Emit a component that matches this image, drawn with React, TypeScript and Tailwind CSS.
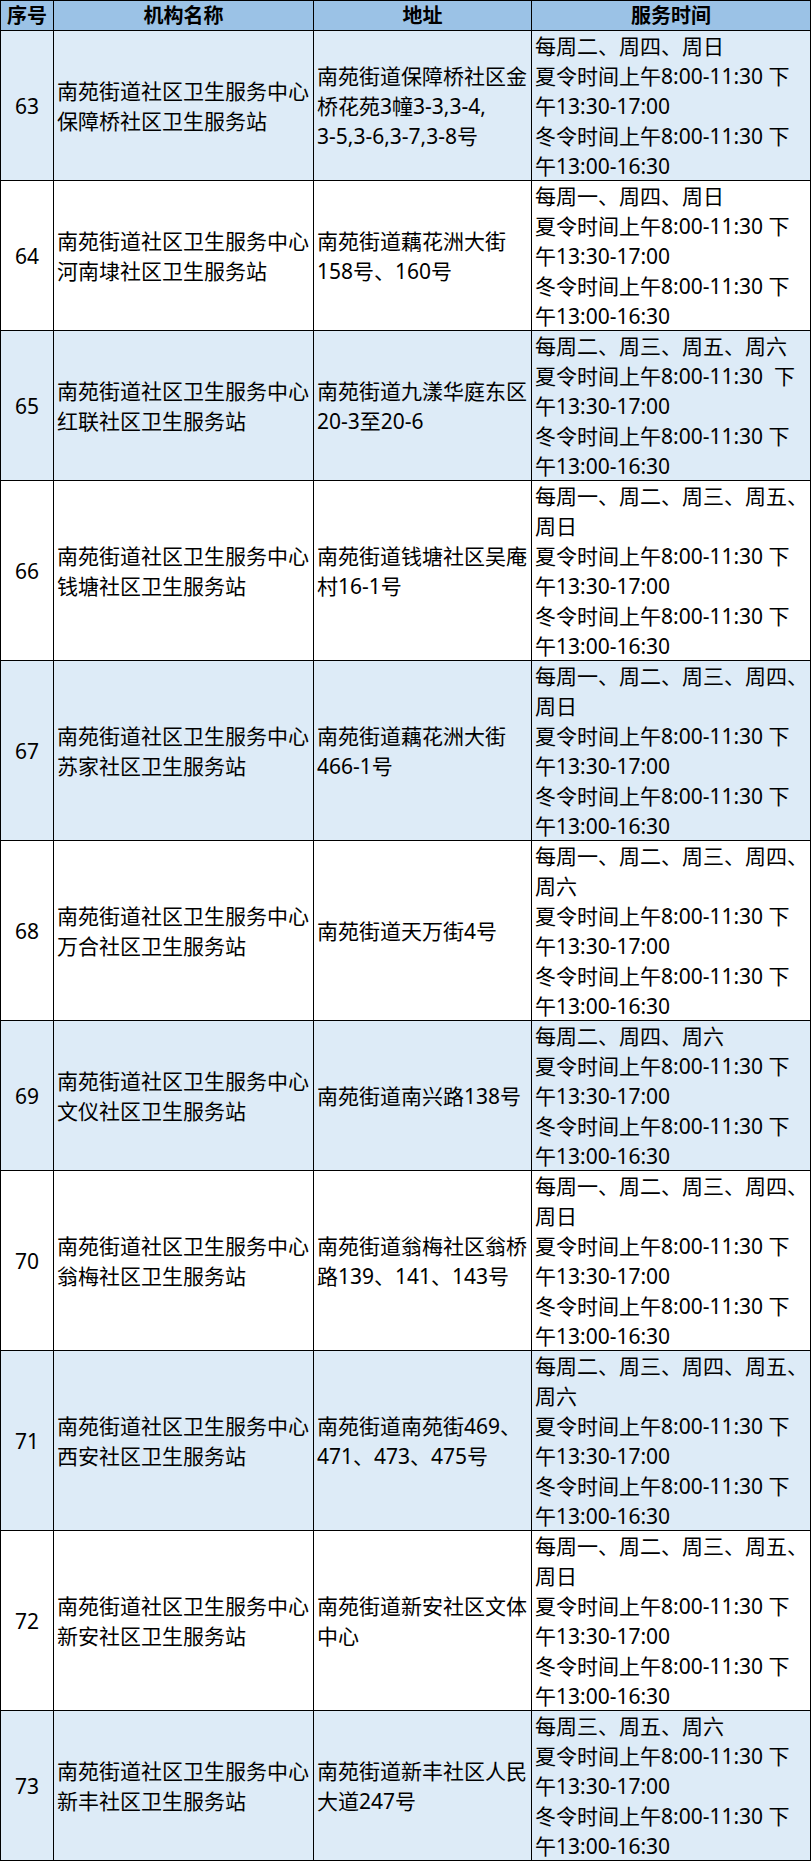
const rows = [
  {
    no: "63",
    name: ["南苑街道社区卫生服务中心", "保障桥社区卫生服务站"],
    addr: ["南苑街道保障桥社区金", "桥花苑3幢3-3,3-4,", "3-5,3-6,3-7,3-8号"],
    days: ["每周二、周四、周日"],
    summer: "夏令时间上午8:00-11:30 下",
  },
  {
    no: "64",
    name: ["南苑街道社区卫生服务中心", "河南埭社区卫生服务站"],
    addr: ["南苑街道藕花洲大街", "158号、160号"],
    days: ["每周一、周四、周日"],
    summer: "夏令时间上午8:00-11:30 下",
  },
  {
    no: "65",
    name: ["南苑街道社区卫生服务中心", "红联社区卫生服务站"],
    addr: ["南苑街道九漾华庭东区", "20-3至20-6"],
    days: ["每周二、周三、周五、周六"],
    summer: "夏令时间上午8:00-11:30  下",
  },
  {
    no: "66",
    name: ["南苑街道社区卫生服务中心", "钱塘社区卫生服务站"],
    addr: ["南苑街道钱塘社区吴庵", "村16-1号"],
    days: ["每周一、周二、周三、周五、", "周日"],
    summer: "夏令时间上午8:00-11:30 下",
  },
  {
    no: "67",
    name: ["南苑街道社区卫生服务中心", "苏家社区卫生服务站"],
    addr: ["南苑街道藕花洲大街", "466-1号"],
    days: ["每周一、周二、周三、周四、", "周日"],
    summer: "夏令时间上午8:00-11:30 下",
  },
  {
    no: "68",
    name: ["南苑街道社区卫生服务中心", "万合社区卫生服务站"],
    addr: ["南苑街道天万街4号"],
    days: ["每周一、周二、周三、周四、", "周六"],
    summer: "夏令时间上午8:00-11:30 下",
  },
  {
    no: "69",
    name: ["南苑街道社区卫生服务中心", "文仪社区卫生服务站"],
    addr: ["南苑街道南兴路138号"],
    days: ["每周二、周四、周六"],
    summer: "夏令时间上午8:00-11:30 下",
  },
  {
    no: "70",
    name: ["南苑街道社区卫生服务中心", "翁梅社区卫生服务站"],
    addr: ["南苑街道翁梅社区翁桥", "路139、141、143号"],
    days: ["每周一、周二、周三、周四、", "周日"],
    summer: "夏令时间上午8:00-11:30 下",
  },
  {
    no: "71",
    name: ["南苑街道社区卫生服务中心", "西安社区卫生服务站"],
    addr: ["南苑街道南苑街469、", "471、473、475号"],
    days: ["每周二、周三、周四、周五、", "周六"],
    summer: "夏令时间上午8:00-11:30 下",
  },
  {
    no: "72",
    name: ["南苑街道社区卫生服务中心", "新安社区卫生服务站"],
    addr: ["南苑街道新安社区文体", "中心"],
    days: ["每周一、周二、周三、周五、", "周日"],
    summer: "夏令时间上午8:00-11:30 下",
  },
  {
    no: "73",
    name: ["南苑街道社区卫生服务中心", "新丰社区卫生服务站"],
    addr: ["南苑街道新丰社区人民", "大道247号"],
    days: ["每周三、周五、周六"],
    summer: "夏令时间上午8:00-11:30 下",
  },
];

function Lines({ lines }: { lines: string[] }) {
  return (
    <div className="flex flex-col">
      {lines.map((l, i) => (
        <span key={i} className="whitespace-pre">
          {l}
        </span>
      ))}
    </div>
  );
}

export default function App() {
  return (
    <div className="min-h-[1861px] bg-white">
      <div className="w-[811px] border-l border-t border-black font-['Noto_Sans','Noto_Sans_CJK_SC',sans-serif] text-[21px] leading-[30px] text-black">
        {/* Header */}
        <div className="flex h-[30px] bg-[#9bc2e6] text-[20px] font-bold">
          <div className="flex w-[53px] items-center justify-center border-b border-r border-black">序号</div>
          <div className="flex w-[260px] items-center justify-center border-b border-r border-black">机构名称</div>
          <div className="flex w-[218px] items-center justify-center border-b border-r border-black">地址</div>
          <div className="flex w-[279px] items-center justify-center border-b border-r border-black">服务时间</div>
        </div>

        {rows.map((r, i) => {
          const hours = [...r.days, r.summer, "午13:30-17:00", "冬令时间上午8:00-11:30 下", "午13:00-16:30"];
          const tall = hours.length > 5;
          return (
            <div
              key={r.no}
              className={`flex overflow-hidden ${tall ? "h-[180px]" : "h-[150px]"} ${i % 2 === 0 ? "bg-[#ddebf7]" : "bg-white"}`}
            >
              <div className="flex w-[53px] items-center justify-center border-b border-r border-black">{r.no}</div>
              <div className="flex w-[260px] items-center overflow-hidden border-b border-r border-black pl-[3px]">
                <Lines lines={r.name} />
              </div>
              <div className="flex w-[218px] items-center overflow-hidden border-b border-r border-black pl-[3px]">
                <Lines lines={r.addr} />
              </div>
              <div className="flex w-[279px] items-center overflow-hidden border-b border-r border-black pl-[3px]">
                <Lines lines={hours} />
              </div>
            </div>
          );
        })}
      </div>
    </div>
  );
}
